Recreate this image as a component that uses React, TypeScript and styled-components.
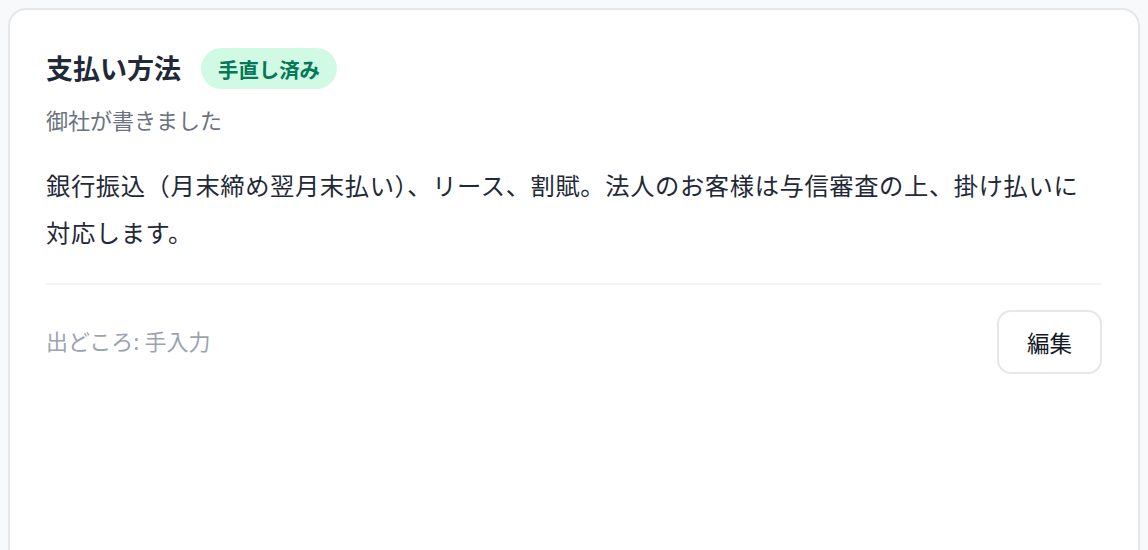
import React from 'react';
import styled, { createGlobalStyle } from 'styled-components';

const GlobalStyle = createGlobalStyle`
  html, body {
    margin: 0;
    background: #f8f9fb;
  }
  body {
    padding: 8px;
    font-family: "Noto Sans CJK JP", "Noto Sans", sans-serif;
    color: #1f2937;
  }
`;

const Card = styled.section`
  background: #ffffff;
  border: 2px solid #e5e7eb;
  border-radius: 18px;
  padding: 38px 36px 200px;
`;

const HeaderRow = styled.div`
  display: flex;
  align-items: center;
  gap: 20px;
`;

const Title = styled.h2`
  margin: 0;
  font-size: 27px;
  font-weight: 700;
  color: #1f2937;
  line-height: 1.5;
`;

const Badge = styled.span`
  display: inline-flex;
  align-items: center;
  height: 41px;
  padding: 0 17px;
  border-radius: 9999px;
  background: #d1fae5;
  color: #047857;
  font-size: 20.4px;
  font-weight: 700;
`;

const Subtitle = styled.p`
  margin: 14px 0 0;
  font-size: 22px;
  line-height: 32px;
  color: #6b7280;
`;

const Body = styled.p`
  margin: 26px 0 0;
  font-size: 24.3px;
  letter-spacing: 0.6px;
  line-height: 47px;
  color: #1f2937;
  padding: 0 12px 28px 0;
  border-bottom: 2px solid #f3f4f6;
`;

const Footer = styled.div`
  display: flex;
  align-items: center;
  justify-content: space-between;
  padding-top: 25px;
`;

const Source = styled.span`
  font-size: 22px;
  color: #9ca3af;
  margin-bottom: 4px;
`;

const EditButton = styled.button`
  width: 105px;
  height: 64px;
  border: 2px solid #e5e7eb;
  border-radius: 14px;
  background: #ffffff;
  font-family: inherit;
  font-size: 22.5px;
  color: #111827;
  cursor: pointer;
`;

export default function App() {
  return (
    <>
      <GlobalStyle />
      <Card>
        <HeaderRow>
          <Title>支払い方法</Title>
          <Badge>手直し済み</Badge>
        </HeaderRow>
        <Subtitle>御社が書きました</Subtitle>
        <Body>
          銀行振込（月末締め翌月末払い）、リース、割賦。法人のお客様は与信審査の上、掛け払いに対応します。
        </Body>
        <Footer>
          <Source>出どころ: 手入力</Source>
          <EditButton>編集</EditButton>
        </Footer>
      </Card>
    </>
  );
}
